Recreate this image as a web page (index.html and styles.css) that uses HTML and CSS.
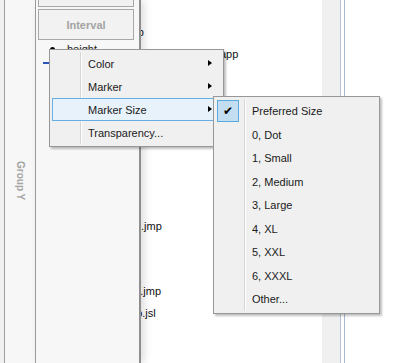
FILE: index.html
```html
<!DOCTYPE html>
<html lang="en">
<head>
  <meta charset="UTF-8">
  <title>Graph Builder - Marker Size</title>
  <link rel="stylesheet" href="styles.css">
</head>
<body>
  <div class="window">
    <div class="edge"></div>

    <div class="group">
      <span class="group-label">Group Y</span>
    </div>

    <div class="panel">
      <div class="drop-zone top"></div>
      <div class="drop-zone">Interval</div>
      <div class="legend">
        <div class="legend-item"><span class="dot"></span>height</div>
        <div class="legend-item"><span class="line"></span></div>
      </div>
    </div>

    <!-- file list runs under the panel, only its tail shows -->
    <ul class="files">
      <li>Big Class Family.jmp</li>
      <li>Multivariate Control Chart Demo.jmpapp</li>
      <li>Cars.jmp</li>
      <li>Cities.jmp</li>
      <li>Hollywood.jmp</li>
      <li>Solubility.jmp</li>
      <li>Popcorn.jmp</li>
      <li>Candy.jmp</li>
      <li>Tablet.jmp</li>
      <li>Blood Pressure Trial.jmp</li>
      <li>Iris.jmp</li>
      <li>Football.jmp</li>
      <li>Drug Toxicity Data 2.jmp</li>
      <li>Graph Builder Demo.jsl</li>
    </ul>

    <div class="gutter"></div>
    <div class="split"></div>

    <ul class="menu">
      <li class="has-sub">Color</li>
      <li class="has-sub">Marker</li>
      <li class="has-sub active">Marker Size</li>
      <li>Transparency...</li>
    </ul>

    <ul class="menu submenu">
      <li><span class="check">&#10004;</span>Preferred Size</li>
      <li>0, Dot</li>
      <li>1, Small</li>
      <li>2, Medium</li>
      <li>3, Large</li>
      <li>4, XL</li>
      <li>5, XXL</li>
      <li>6, XXXL</li>
      <li>Other...</li>
    </ul>
  </div>
</body>
</html>
```

FILE: styles.css
```css
body {
  margin: 0;
  font-family: "Liberation Sans", Arial, sans-serif;
  font-size: 11px;
  color: #1a1a1a;
  background: #fff;
  overflow: hidden;
}
ul {
  list-style: none;
  margin: 0;
  padding: 0;
}
.window {
  position: relative;
  display: grid;
  grid-template-columns: 5px 31px 105px 181px 18px 1fr;
  height: 363px;
  overflow: hidden;
}
.edge {
  grid-column: 1;
  grid-row: 1;
  background: #f0f0f0;
  border-right: 1px solid #a0a0a0;
}
.group {
  grid-column: 2;
  grid-row: 1;
  background: #f7f7f7;
  border-right: 1px solid #a0a0a0;
  display: flex;
  justify-content: center;
  padding-top: 161px;
}
.group-label {
  writing-mode: vertical-rl;
  font-size: 10px;
  font-weight: bold;
  color: #a3a3a3;
  height: max-content;
}
.panel {
  grid-column: 3;
  grid-row: 1;
  z-index: 1;
  background: #f7f7f7;
  border-right: 2px solid #8e8e8e;
  box-shadow: 3px 0 8px rgba(0,0,0,0.14);
  padding: 0 5px 0 2px;
}
.drop-zone {
  height: 29px;
  border: 1px solid #a8a8a8;
  background: #f2f2f2;
  margin-bottom: 2px;
  display: flex;
  align-items: center;
  justify-content: center;
  font-weight: bold;
  color: #a3a3a3;
}
.drop-zone.top {
  margin-top: -24px;
}
.legend {
  padding-left: 5px;
}
.legend-item {
  display: flex;
  align-items: center;
  height: 14px;
  gap: 12px;
}
.dot {
  width: 5px;
  height: 5px;
  border-radius: 50%;
  background: #000;
  margin-left: 7px;
}
.line {
  width: 22px;
  height: 2px;
  background: #2b55b8;
}
.files {
  grid-column: 4;
  grid-row: 1;
  padding-top: 22px;
  line-height: 21.6px;
  white-space: nowrap;
  overflow: hidden;
  color: #111;
}
.files li {
  margin-left: -99px;
}
.gutter {
  grid-column: 5;
  grid-row: 1;
  background: #f0f0f0;
}
.split {
  grid-column: 6;
  grid-row: 1;
  width: 3px;
  border-left: 1px solid #b3c4df;
  border-right: 1px solid #a6b8d6;
}
.menu {
  position: absolute;
  left: 49px;
  top: 49px;
  width: 169px;
  z-index: 2;
  padding: 2px;
  background: #f0f0f0;
  border: 1px solid #979797;
  box-shadow: 2px 2px 2px rgba(0,0,0,0.25);
}
.menu::before {
  content: "";
  position: absolute;
  left: 30px;
  top: 2px;
  bottom: 2px;
  width: 1px;
  background: #d5d5d5;
  border-right: 1px solid #fff;
}
.menu li {
  position: relative;
  height: 23px;
  line-height: 22px;
  padding-left: 35px;
  border: 1px solid transparent;
  box-sizing: border-box;
  white-space: nowrap;
}
.menu .has-sub::after {
  content: "";
  position: absolute;
  right: 8px;
  top: 7px;
  border-left: 4px solid #000;
  border-top: 3.5px solid transparent;
  border-bottom: 3.5px solid transparent;
}
.menu .active {
  background: #e8f2fb;
  border-color: #66aee6;
}
.submenu {
  left: 213px;
  top: 96px;
  width: 161px;
  z-index: 3;
}
.submenu li {
  height: 23.5px;
  line-height: 22.5px;
}
.check {
  position: absolute;
  left: 0;
  top: 0;
  width: 20px;
  height: 20px;
  background: #c3def1;
  border: 1px solid #5aaae2;
  text-align: center;
  line-height: 20px;
  font-size: 12px;
  color: #000;
}
```
